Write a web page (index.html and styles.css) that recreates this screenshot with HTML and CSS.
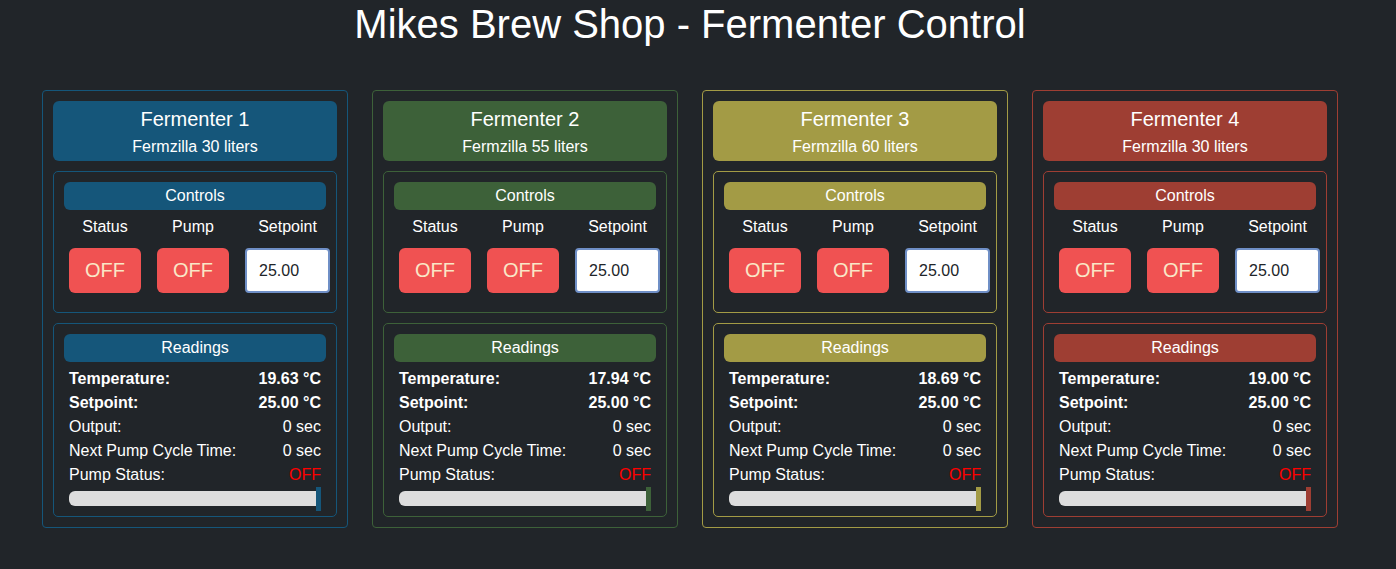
FILE: index.html
```html
<!DOCTYPE html>
<html lang="en">
<head>
<meta charset="utf-8">
<title>Mikes Brew Shop - Fermenter Control</title>
<link rel="stylesheet" href="styles.css">
</head>
<body>
<div class="page">
  <h1 class="title">Mikes Brew Shop - Fermenter Control</h1>
  <div class="cards">

    <div class="card c1">
      <div class="head"><div class="name">Fermenter 1</div><div class="sub">Fermzilla 30 liters</div></div>
      <div class="box">
        <div class="bar-title">Controls</div>
        <div class="ctrl-grid">
          <div class="lbl">Status</div><div class="lbl">Pump</div><div class="lbl">Setpoint</div>
          <button class="btn-off">OFF</button><button class="btn-off">OFF</button><input class="sp" type="text" value="25.00">
        </div>
      </div>
      <div class="box readings">
        <div class="bar-title">Readings</div>
        <div class="row bold"><span>Temperature:</span><span>19.63 °C</span></div>
        <div class="row bold"><span>Setpoint:</span><span>25.00 °C</span></div>
        <div class="row"><span>Output:</span><span>0 sec</span></div>
        <div class="row"><span>Next Pump Cycle Time:</span><span>0 sec</span></div>
        <div class="row"><span>Pump Status:</span><span class="red">OFF</span></div>
        <div class="slider"><div class="track"></div><div class="thumb"></div></div>
      </div>
    </div>

    <div class="card c2">
      <div class="head"><div class="name">Fermenter 2</div><div class="sub">Fermzilla 55 liters</div></div>
      <div class="box">
        <div class="bar-title">Controls</div>
        <div class="ctrl-grid">
          <div class="lbl">Status</div><div class="lbl">Pump</div><div class="lbl">Setpoint</div>
          <button class="btn-off">OFF</button><button class="btn-off">OFF</button><input class="sp" type="text" value="25.00">
        </div>
      </div>
      <div class="box readings">
        <div class="bar-title">Readings</div>
        <div class="row bold"><span>Temperature:</span><span>17.94 °C</span></div>
        <div class="row bold"><span>Setpoint:</span><span>25.00 °C</span></div>
        <div class="row"><span>Output:</span><span>0 sec</span></div>
        <div class="row"><span>Next Pump Cycle Time:</span><span>0 sec</span></div>
        <div class="row"><span>Pump Status:</span><span class="red">OFF</span></div>
        <div class="slider"><div class="track"></div><div class="thumb"></div></div>
      </div>
    </div>

    <div class="card c3">
      <div class="head"><div class="name">Fermenter 3</div><div class="sub">Fermzilla 60 liters</div></div>
      <div class="box">
        <div class="bar-title">Controls</div>
        <div class="ctrl-grid">
          <div class="lbl">Status</div><div class="lbl">Pump</div><div class="lbl">Setpoint</div>
          <button class="btn-off">OFF</button><button class="btn-off">OFF</button><input class="sp" type="text" value="25.00">
        </div>
      </div>
      <div class="box readings">
        <div class="bar-title">Readings</div>
        <div class="row bold"><span>Temperature:</span><span>18.69 °C</span></div>
        <div class="row bold"><span>Setpoint:</span><span>25.00 °C</span></div>
        <div class="row"><span>Output:</span><span>0 sec</span></div>
        <div class="row"><span>Next Pump Cycle Time:</span><span>0 sec</span></div>
        <div class="row"><span>Pump Status:</span><span class="red">OFF</span></div>
        <div class="slider"><div class="track"></div><div class="thumb"></div></div>
      </div>
    </div>

    <div class="card c4">
      <div class="head"><div class="name">Fermenter 4</div><div class="sub">Fermzilla 30 liters</div></div>
      <div class="box">
        <div class="bar-title">Controls</div>
        <div class="ctrl-grid">
          <div class="lbl">Status</div><div class="lbl">Pump</div><div class="lbl">Setpoint</div>
          <button class="btn-off">OFF</button><button class="btn-off">OFF</button><input class="sp" type="text" value="25.00">
        </div>
      </div>
      <div class="box readings">
        <div class="bar-title">Readings</div>
        <div class="row bold"><span>Temperature:</span><span>19.00 °C</span></div>
        <div class="row bold"><span>Setpoint:</span><span>25.00 °C</span></div>
        <div class="row"><span>Output:</span><span>0 sec</span></div>
        <div class="row"><span>Next Pump Cycle Time:</span><span>0 sec</span></div>
        <div class="row"><span>Pump Status:</span><span class="red">OFF</span></div>
        <div class="slider"><div class="track"></div><div class="thumb"></div></div>
      </div>
    </div>

  </div>
</div>
</body>
</html>
```
FILE: styles.css
```css
html, body {
  margin: 0;
  padding: 0;
  background: #212529;
  color: #ffffff;
  font-family: "Liberation Sans", Arial, sans-serif;
  font-size: 16px;
  line-height: 24px;
}

.page {
  width: 1380px;
}

.title {
  margin: 0;
  font-size: 40px;
  line-height: 48px;
  font-weight: normal;
  text-align: center;
  color: #ffffff;
}

.cards {
  display: flex;
  justify-content: center;
  gap: 24px;
  margin-top: 42px;
}

.card {
  width: 306px;
  box-sizing: border-box;
  border: 1px solid var(--c);
  border-radius: 4px;
  padding: 10px;
}

.c1 { --c: #15567a; }
.c2 { --c: #3d6139; }
.c3 { --c: #a39b45; }
.c4 { --c: #9e3e33; }

.head {
  background: var(--c);
  border-radius: 6px;
  text-align: center;
  padding: 6px 0 2px;
}

.name {
  font-size: 20px;
  line-height: 24px;
  margin-bottom: 4px;
}

.sub {
  font-size: 16px;
  line-height: 24px;
}

.box {
  margin-top: 10px;
  border: 1px solid var(--c);
  border-radius: 5px;
  padding: 10px;
}

.bar-title {
  background: var(--c);
  border-radius: 6px;
  text-align: center;
  padding: 2px 0;
  line-height: 24px;
  margin-bottom: 5px;
}

.ctrl-grid {
  display: grid;
  grid-template-columns: 72px 72px 85px;
  column-gap: 16px;
  row-gap: 9px;
  margin-left: 5px;
  margin-bottom: 9px;
  width: 261px;
}

.lbl {
  text-align: center;
  line-height: 24px;
}

.btn-off {
  height: 45px;
  border: none;
  border-radius: 6px;
  background: #f05252;
  color: #f9e7c6;
  font-family: "Liberation Sans", Arial, sans-serif;
  font-size: 20px;
  padding: 0;
}

.sp {
  height: 45px;
  width: 85px;
  box-sizing: border-box;
  border: 2px solid #6f8fc6;
  border-radius: 4px;
  background: #ffffff;
  color: #212529;
  font-family: "Liberation Sans", Arial, sans-serif;
  font-size: 16px;
  padding: 0 0 0 12px;
  outline: none;
}

.row {
  display: flex;
  justify-content: space-between;
  padding: 0 5px;
  line-height: 24px;
}

.bold {
  font-weight: bold;
}

.red {
  color: #ff0000;
}

.slider {
  display: flex;
  align-items: center;
  height: 15px;
  margin: 4px 5px 0;
}

.track {
  flex: 1;
  height: 15px;
  background: #dddddd;
  border-radius: 6px 0 0 6px;
}

.thumb {
  width: 5px;
  height: 24px;
  flex: none;
  background: var(--c);
}
```
